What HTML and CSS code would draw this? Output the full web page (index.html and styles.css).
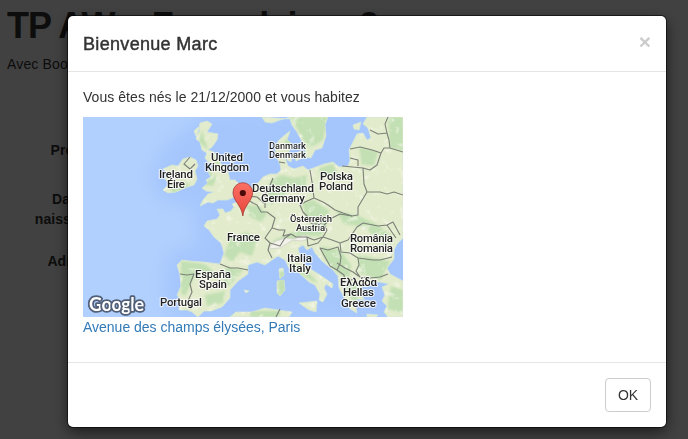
FILE: index.html
```html
<!DOCTYPE html>
<html lang="fr">
<head>
<meta charset="utf-8">
<title>TP AW – Formulaire</title>
<link rel="stylesheet" href="styles.css">
</head>
<body>
<main class="page">
  <h1>TP AW – Formulaire n2</h1>
  <p>Avec Bootstrap</p>
  <form class="form">
    <label>Prénom</label>
    <label>Date de naissance</label>
    <label>Adresse</label>
  </form>
</main>
<div class="backdrop">
  <section class="modal" role="dialog">
    <header class="modal-header">
      <h4>Bienvenue Marc</h4>
      <button class="close" type="button">×</button>
    </header>
    <div class="modal-body">
      <p class="intro">Vous êtes nés le 21/12/2000 et vous habitez</p>
      <svg class="map" viewBox="83 117 320 200" width="320" height="200">
        <defs>
          <filter id="soft" x="-20%" y="-20%" width="140%" height="140%"><feGaussianBlur stdDeviation="9"/></filter>
          <filter id="patch"><feGaussianBlur stdDeviation="1.2"/></filter>
          <filter id="relief" x="0" y="0" width="100%" height="100%">
            <feTurbulence type="fractalNoise" baseFrequency=".12" numOctaves="4" seed="8"/>
            <feColorMatrix values="0 0 0 0 .95  0 0 0 0 .95  0 0 0 0 .86  4 0 0 0 -2.3"/>
          </filter>
          <linearGradient id="pin" x1="0" y1="0" x2="0" y2="1"><stop stop-color="#fb7064"/><stop offset="1" stop-color="#e8453b"/></linearGradient>
          <path id="land" d="M200 123L207 121L212 124L207 132L218 134L217 140L212 147L208 150L214 152L219 160L222 165L228 172L230 180L235 180L239 184L237 189L232 193L235 197L227 200L218 200L213 203L208 202L200 206L203 200L208 194L214 192L206 191L202 188L208 183L206 180L211 177L208 171L214 166L208 162L205 158L207 153L202 150L200 142L196 139L198 132ZM198 127L194 131L196 136L200 131ZM183 159L190 157L196 160L198 166L195 171L197 179L194 185L185 188L176 192L168 193L163 190L169 184L165 179L168 173L163 169L172 165L178 166Z
          M220 215L217 209L223 209L225 213L231 211L234 207L232 204L240 201L245 193L252 188L259 182L263 177L270 174L277 174L281 170L280 164L277 158L275 148L278 141L285 135L290 131L287 140L292 144L289 152L285 158L288 166L294 169L303 166L308 170L316 167L324 164L333 162L339 167L348 166L350 161L349 150L353 142L357 134L363 133L367 140L371 138L368 128L363 124L367 117L403 117L403 238L397 244L394 250L394 259L387 268L390 274L403 281L403 317L388 317L384 312L387 306L382 301L385 295L382 287L389 284L380 282L371 282L367 287L360 286L363 293L358 292L365 300L356 299L360 305L355 303L357 313L350 309L348 304L344 297L339 288L338 276L333 270L322 261L315 253L312 247L307 250L303 245L298 248L300 256L304 265L312 270L320 275L333 284L332 288L326 284L324 288L327 294L323 302L319 300L320 294L315 285L309 282L298 272L289 268L285 260L278 256L272 260L265 265L257 262L248 265L248 274L238 281L230 290L230 298L222 307L211 311L204 311L198 317L192 312L187 310L179 310L180 299L177 295L181 286L180 275L177 265L182 260L190 261L203 262L220 264L224 253L221 243L214 237L209 230L204 226L207 221L217 219Z
          M262 117L265 122L272 123L280 120L291 117L328 117L325 124L326 136L322 148L315 150L311 158L306 157L304 145L297 132L292 125L290 119ZM294 154L301 151L302 158L296 161ZM287 156L292 156L291 162L287 160ZM279 269L283 268L284 275L280 279ZM277 281L284 280L285 290L280 296L277 293ZM299 303L308 302L317 301L316 312L309 310ZM230 317L236 312L252 312L265 308L278 310L292 312L289 317ZM244 290L249 291L246 293ZM353 125L361 122L359 130L354 129ZM367 314L378 315L376 317L367 317Z"/>
          <clipPath id="shore"><use href="#land"/></clipPath>
        </defs>
        <rect x="83" y="117" width="320" height="200" fill="#b1d0fe"/>
        <path d="M212 110L166 144L149 178L163 202L197 207L192 219L199 244L169 252L162 286L173 320H420V100Z" fill="#a5c6fd" filter="url(#soft)"/>
        <use href="#land" fill="#e2ebcb" stroke="#d4e6d5" stroke-width=".8"/>
        <g clip-path="url(#shore)">
          <g fill="#c2e0b3" filter="url(#patch)">
            <path d="M291 117H328L323 140L309 149L299 132ZM388 117H403V151L390 147ZM359 147L378 152L374 165L362 165ZM202 130L208 150L199 142ZM207 170L217 177L213 186L205 185ZM213 154L220 164L217 170ZM270 180L282 175L294 178L307 175L305 188L290 192L280 200L266 206ZM245 205L259 206L267 214L261 222L249 216ZM231 238L247 232L257 240L252 256L240 252L232 262L224 255ZM272 241L306 227L329 218L321 236L306 236L278 245ZM302 203L313 200L330 211L319 224L306 218ZM320 246L340 250L351 265L349 280L339 274L326 262ZM336 211L359 216L378 225L394 238L383 246L365 227L344 224ZM358 255L390 261L381 280L360 273ZM344 285L357 282L363 290L354 304ZM181 261L205 264L214 272L194 278L185 296L181 293ZM226 267L243 270L229 286L222 280ZM205 295L225 291L223 303L207 306ZM391 286L403 290V313L387 309ZM319 168L333 164L337 173L320 178ZM286 261L304 267L318 283L312 281L290 267ZM279 268H285V295H278ZM250 311H280V317H250ZM284 142L291 134L289 151ZM170 184L190 182L186 190L172 193Z"/>
          </g>
          <rect x="83" y="117" width="320" height="200" filter="url(#relief)" opacity=".6"/>
          <path d="M268 249L274 242L285 238L294 239L304 235L310 239L301 241L293 240L280 248Z" fill="#f2f1ea" stroke="#d7d9cd" stroke-width="1"/>
        </g>
        <g class="borders">
          <path d="M190 157L184 164L190 169L195 164M244 193L248 200L253 203L257 205L261 212L267 212L275 218L272 228L265 238L270 243L268 250L272 258M273 178L269 188L265 195L265 208M248 196L257 197L264 203M279 162L285 163M310 170L312 182L314 198L305 202L300 205L303 212L312 221L322 217L332 218M314 198L323 202L328 205L335 210L343 213L352 216L358 215L358 207L367 192L364 184L363 168L342 166M350 149L360 147L372 150L381 153L377 165L370 170L363 168M350 158L358 160L358 166M381 153L384 148L390 148L389 140L387 133L378 134L370 130M387 133L385 124L388 117M390 148L403 152M367 192L380 192L387 194L394 192L403 195"/>
          <path d="M272 228L279 230L285 230L283 236L291 234L296 237L307 237L314 240L323 237L327 230L324 225L332 218L340 214L352 216M270 243L280 246L285 238L291 234M307 237L308 246L318 243L323 237L332 240L340 243L348 240L357 227L363 223L378 226L387 225L393 222L400 235M387 225L396 238M340 243L341 252L350 253L358 258L373 260L380 260L392 257M358 258L359 265L356 271L360 277L370 278L380 277L388 274M320 248L328 250L338 247L341 257L340 264L337 270L330 266ZM337 263L345 268L353 272L360 277M340 279L345 282L354 279M337 270L344 275L345 282M220 264L230 268L238 268L248 270M180 274L187 275L194 274L190 284L192 292L188 301L191 309M280 309L276 317M307 221L313 224L320 224L325 219"/>
        </g>
        <g class="names">
          <text x="211" y="160.5" textLength="32">United</text><text x="205" y="171" textLength="44">Kingdom</text>
          <text x="159" y="178" textLength="34">Ireland</text><text x="167" y="188" textLength="18">Éire</text>
          <text class="minor" x="269" y="149.3" textLength="37">Danmark</text><text class="minor" x="269" y="158.3" textLength="37">Denmark</text>
          <text x="320" y="180" textLength="33">Polska</text><text x="319" y="190" textLength="34">Poland</text>
          <text x="252" y="192" textLength="62">Deutschland</text><text x="261" y="202" textLength="44">Germany</text>
          <text class="minor" x="290" y="222" textLength="42">Österreich</text><text class="minor" x="296" y="231" textLength="29">Austria</text>
          <text x="227" y="241" textLength="33">France</text>
          <text x="350" y="242" textLength="43">România</text><text x="350" y="252" textLength="43">Romania</text>
          <text x="287" y="262" textLength="25">Italia</text><text x="289" y="272" textLength="22">Italy</text>
          <text x="195" y="278" textLength="36">España</text><text x="199" y="288" textLength="28">Spain</text>
          <text x="160" y="306" textLength="42">Portugal</text>
          <text x="340" y="286" textLength="37">Ελλάδα</text><text x="343" y="296" textLength="31">Hellas</text><text x="341" y="307" textLength="35">Greece</text>
        </g>
        <path d="M242.8 216C241.5 205 233 201 233 192.5A9.8 9.8 0 0 1 252.6 192.5C252.6 201 244.1 205 242.8 216Z" fill="url(#pin)" stroke="#a63c36" stroke-width=".8"/>
        <circle cx="242.8" cy="193" r="3.1" fill="#4b0b0b"/>
        <text class="brand" x="89" y="310.5" textLength="55">Google</text>
      </svg>
      <a class="address">Avenue des champs élysées, Paris</a>
    </div>
    <footer class="modal-footer"><button class="ok" type="button">OK</button></footer>
  </section>
</div>
</body>
</html>
```
FILE: styles.css
```css
* { box-sizing: border-box; }
body {
  margin: 0;
  height: 439px;
  overflow: hidden;
  background: #fff;
  color: #333;
  font: 14px/20px "Liberation Sans", Arial, sans-serif;
}
.page { padding: 5px 7px 0; }
.page h1 { margin: 0 0 9px; font-size: 36px; line-height: 42px; height: 40px; font-weight: 700; letter-spacing: -.9px; white-space: nowrap; }
.page p { margin: 0; letter-spacing: .15px; }
.form { display: grid; width: 96px; margin-top: 66px; gap: 29px; text-align: right; font-weight: 700; letter-spacing: .05px; }
.form label:last-child { margin-top: -7px; }
.backdrop {
  position: fixed;
  inset: 0;
  padding: 16px 22px 0 68px;
  background: rgba(0, 0, 0, .745);
}
.modal {
  height: 411px;
  background: #fff;
  border-radius: 5px;
  box-shadow: 0 0 0 1px rgba(0, 0, 0, .55), 0 5px 15px rgba(0, 0, 0, .6);
}
.modal-header {
  display: flex;
  justify-content: space-between;
  height: 56px;
  padding: 15px;
  border-bottom: 1px solid #e5e5e5;
}
.modal-header h4 {
  margin: 0;
  font-size: 18px;
  line-height: 26px;
  font-weight: 400;
  letter-spacing: .32px;
  -webkit-text-stroke: .45px #333;
}
.close {
  height: 21px;
  padding: 0;
  border: 0;
  background: none;
  color: #ccc;
  font: 700 21px/21px "Liberation Sans", Arial, sans-serif;
}
.modal-body { height: 290px; padding: 15px; }
.intro { margin: 0 0 10px; letter-spacing: .05px; }
.map { display: block; }
.address { display: block; color: #337ab7; letter-spacing: -.01px; }
.modal-footer {
  display: flex;
  justify-content: flex-end;
  padding: 15px;
  border-top: 1px solid #e5e5e5;
}
.ok {
  width: 46px;
  height: 34px;
  padding: 0;
  border: 1px solid #ccc;
  border-radius: 4px;
  background: #fff;
  color: #333;
  font: 14px/20px "Liberation Sans", Arial, sans-serif;
}
.borders { fill: none; stroke: #7c8078; stroke-width: 1.1; stroke-linejoin: round; }
.names {
  font: 500 11.5px Roboto, sans-serif;
  fill: #222;
  stroke: rgba(255, 255, 255, .75);
  stroke-width: 2.2px;
  stroke-linejoin: round;
  paint-order: stroke;
}
.minor { font-size: 9.5px; }
.brand {
  font: 700 18px Lato, sans-serif;
  fill: #fff;
  stroke: #526078;
  stroke-width: 3.6px;
  stroke-linejoin: round;
  paint-order: stroke;
}
```
